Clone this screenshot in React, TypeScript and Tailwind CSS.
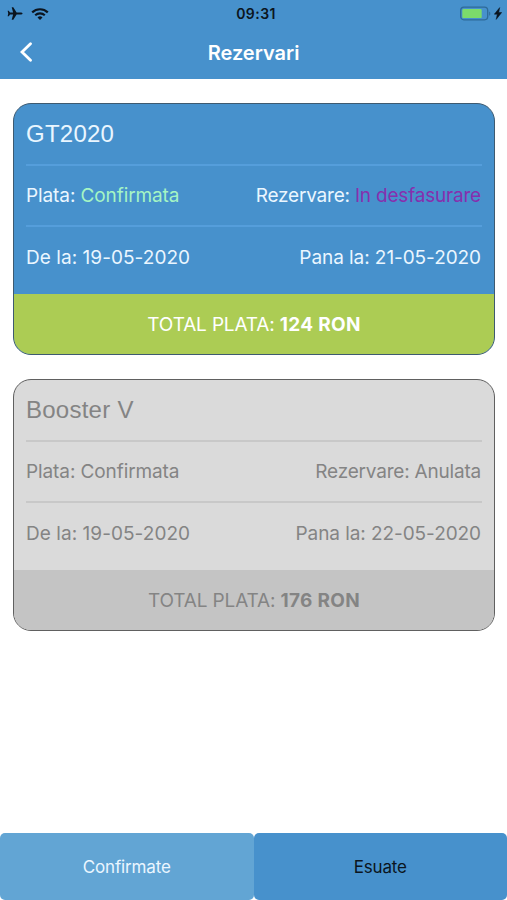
import { useState } from 'react'
import { clsx } from 'clsx'

interface Reservation {
  id: number
  name: string
  payment: string
  status: string
  from: string
  to: string
  total: string
  cancelled: boolean
}

const RESERVATIONS: Reservation[] = [
  {
    id: 1,
    name: 'GT2020',
    payment: 'Confirmata',
    status: 'In desfasurare',
    from: '19-05-2020',
    to: '21-05-2020',
    total: '124 RON',
    cancelled: false,
  },
  {
    id: 2,
    name: 'Booster V',
    payment: 'Confirmata',
    status: 'Anulata',
    from: '19-05-2020',
    to: '22-05-2020',
    total: '176 RON',
    cancelled: true,
  },
]

function StatusBar() {
  return (
    <div className="relative flex h-[27px] items-center justify-between pr-[5px] pl-[7px]">
      <div className="flex items-center gap-2">
        <svg className="h-[15px] w-4" viewBox="0 0 17 15" fill="#0b1520">
          <path d="M16.5 7.5c0-.7-1-1-2.3-1h-4L6.700.8H5l1.5 5.600-3.300.1L1.900 4.600H.7l.6 2.900-.6 2.900h1.200l1.300-1.900 3.300.1L5 14.200h1.700l3.500-5.700h4c1.300 0 2.300-.3 2.300-1Z" />
        </svg>
        <svg className="h-3 w-[18px]" viewBox="0 0 18 12" fill="none" stroke="#0b1520">
          <path d="M1.2 4.4a11.2 11.2 0 0 1 15.6 0" strokeWidth="2.2" />
          <path d="M4.2 7.3a7 7 0 0 1 9.6 0" strokeWidth="2.1" />
          <path d="M9 12 6.5 9.5a3.6 3.6 0 0 1 5 0Z" fill="#0b1520" stroke="none" />
        </svg>
      </div>
      <span className="absolute inset-x-0 pl-[5px] text-center text-[14px] leading-5 font-semibold tracking-[0.45px] text-[#0b1520]">
        09:31
      </span>
      <div className="flex items-center gap-[2px]">
        <svg className="h-[15px] w-8" viewBox="0 0 32 15" fill="none">
          <rect x=".7" y="1.2" width="27" height="12.6" rx="3.2" stroke="#2f6a98" strokeWidth="1.3" />
          <rect x="2.3" y="2.9" width="19.4" height="9.2" rx="1.2" fill="#7cdb6b" />
          <path d="M29.2 5.4c1.5.6 1.5 3.8 0 4.4Z" fill="#2f6a98" />
        </svg>
        <svg className="h-[13px] w-2" viewBox="0 0 8 13" fill="#0b1520" stroke="#0b1520" strokeWidth=".5">
          <path d="M5.7.6.3 7.2h3L2.2 12.400l5.500-6.900h-3Z" />
        </svg>
      </div>
    </div>
  )
}

function ReservationCard({ item }: { item: Reservation }) {
  return (
    <div
      className={clsx(
        'overflow-hidden rounded-[18px] border text-[19px] leading-6',
        item.cancelled
          ? 'border-[#606060] bg-[#dadada] text-[#848484]'
          : 'border-[#3e5a70] bg-[#4791cc] text-[#eaf6ff]'
      )}
    >
      <div className="px-3">
        <h2 className="flex h-[60px] items-center font-['Liberation_Sans',sans-serif] text-[24px] tracking-[0.25px]">
          {item.name}
        </h2>
        <div
          className={clsx(
            'flex h-[63px] items-center justify-between border-y-2 pt-px pr-px tracking-[-0.2px]',
            item.cancelled ? 'border-[#c8c8c8]' : 'border-[#559edb]'
          )}
        >
          <span className="tracking-[-0.1px]">
            Plata: <span className={clsx(!item.cancelled && 'text-[#a5f5c4]')}>{item.payment}</span>
          </span>
          <span>
            Rezervare: <span className={clsx(!item.cancelled && 'text-[#862fae]')}>{item.status}</span>
          </span>
        </div>
        <div className="flex h-[67px] items-center justify-between pr-px pb-[5px]">
          <span className="tracking-[0.05px]">De la: {item.from}</span>
          <span className="tracking-[-0.07px]">Pana la: {item.to}</span>
        </div>
      </div>
      <div
        className={clsx(
          'flex h-[60px] items-center justify-center pt-0.5',
          item.cancelled ? 'bg-[#c4c4c4]' : 'bg-[#accc54] text-white'
        )}
      >
        <span>
          <span className="tracking-[-0.15px]">TOTAL PLATA: </span>
          <b className="tracking-[0.3px]">{item.total}</b>
        </span>
      </div>
    </div>
  )
}

export default function App() {
  const [tab, setTab] = useState('confirmate')

  return (
    <div className="flex h-[900px] w-[507px] flex-col bg-white font-['Inter',sans-serif]">
      <header className="h-[79px] shrink-0 bg-[#4791cc]">
        <StatusBar />
        <div className="relative flex h-[50px] items-center justify-center">
          <button className="absolute left-5" aria-label="Inapoi">
            <svg className="h-5 w-3" viewBox="0 0 12 20" fill="none" stroke="white" strokeWidth="2.8" strokeLinecap="round">
              <path d="M10.5 1.7 2 10l8.5 8.300" />
            </svg>
          </button>
          <h1 className="pt-px text-[20px] font-semibold text-white">Rezervari</h1>
        </div>
      </header>

      <main className="flex flex-1 flex-col gap-6 px-[13px] pt-6 pr-3">
        {RESERVATIONS.map(item => (
          <ReservationCard key={item.id} item={item} />
        ))}
      </main>

      {/* Tab-uri jos */}
      <nav className="grid h-[67px] grid-cols-2 text-[17px] tracking-[-0.15px]">
        <button
          onClick={() => setTab('confirmate')}
          className={clsx('rounded-[5px] pt-0.5', tab === 'confirmate' ? 'bg-[#62a5d4] text-[#eaf6ff]' : 'bg-[#4791cc] text-[#0b1520]')}
        >
          Confirmate
        </button>
        <button
          onClick={() => setTab('esuate')}
          className={clsx('rounded-[5px] pt-0.5', tab === 'esuate' ? 'bg-[#62a5d4] text-[#eaf6ff]' : 'bg-[#4791cc] text-[#0b1520]')}
        >
          Esuate
        </button>
      </nav>
    </div>
  )
}
